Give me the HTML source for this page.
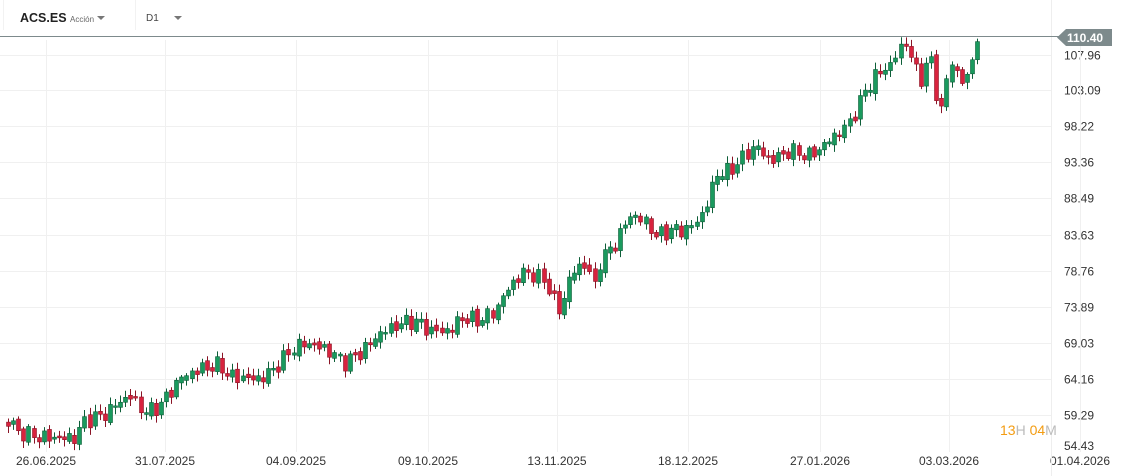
<!DOCTYPE html>
<html><head><meta charset="utf-8"><style>
body{margin:0;width:1127px;height:476px;background:#fff;overflow:hidden;font-family:"Liberation Sans",sans-serif;position:relative}
.t{position:absolute;font-size:12px;color:#333}
</style></head><body>
<svg id="s" width="1127" height="476" style="position:absolute;left:0;top:0"></svg>
<div class="t" style="left:20px;top:11px;font-weight:bold;font-size:12.5px;color:#222">ACS.ES <span style="font-weight:normal;font-size:8px;color:#666">Acción</span></div>
<div style="position:absolute;left:97px;top:16px;border:4px solid transparent;border-top:4px solid #777;border-bottom:0"></div>
<div class="t" style="left:146px;top:13px;font-size:10px;color:#444">D1</div>
<div style="position:absolute;left:174px;top:16px;border:4px solid transparent;border-top:4px solid #777;border-bottom:0"></div>
<div style="position:absolute;left:1000px;top:422px;font-size:14px;color:#f39c12">13<span style="color:#bbb">H</span> 04<span style="color:#bbb">M</span></div>
<script>
const s=document.getElementById('s');let h='';
const labs=[[55.5,'107.96'],[90.5,'103.09'],[126.5,'98.22'],[162.5,'93.36'],[198.5,'88.49'],[235.5,'83.63'],[271.5,'78.76'],[307.5,'73.89'],[343.5,'69.03'],[379.5,'64.16'],[415.5,'59.29']];
labs.forEach(l=>{h+=`<line x1="0" x2="1051" y1="${l[0]}" y2="${l[0]}" stroke="#f0f0f0"/><text x="1064" y="${l[0]+4}" font-size="12" fill="#333" font-family="Liberation Sans">${l[1]}</text>`});
h+=`<text x="1064" y="450" font-size="12" fill="#333" font-family="Liberation Sans">54.43</text>`;
const d=[[46,'26.06.2025'],[165,'31.07.2025'],[296,'04.09.2025'],[428,'09.10.2025'],[557,'13.11.2025'],[688,'18.12.2025'],[820,'27.01.2026'],[949,'03.03.2026'],[1080,'01.04.2026']];
d.forEach(l=>{h+=`<line x1="${l[0]+.5}" x2="${l[0]+.5}" y1="40" y2="452" stroke="#f0f0f0"/><text x="${l[0]}" y="465" font-size="12" fill="#333" text-anchor="middle" font-family="Liberation Sans">${l[1]}</text>`});
h+=`<line x1="3.5" x2="3.5" y1="0" y2="30" stroke="#f2f2f2"/><line x1="135.5" x2="135.5" y1="0" y2="30" stroke="#f2f2f2"/>`;
h+=`<line x1="1051.5" x2="1051.5" y1="0" y2="476" stroke="#eee"/>`;
const P=[[8,420],[20,432],[45,437],[75,437],[85,420],[105,413],[115,405],[130,395],[145,412],[160,405],[180,378],[200,368],[220,364],[230,376],[260,378],[275,368],[290,350],[305,342],[325,348],[345,362],[360,352],[380,333],[400,323],[415,320],[430,330],[450,330],[460,317],[480,320],[495,310],[510,285],[525,270],[545,280],[560,312],[570,275],[585,262],[595,285],[600,260],[615,243],[630,215],[645,220],[655,235],[670,230],[690,228],[705,210],[715,175],[730,170],[745,155],[755,145],[770,160],[790,150],[810,155],[820,148],[835,135],[850,122],[860,100],[875,75],[890,65],[905,40],[920,80],[930,55],[940,115],[950,60],[965,85],[977,38]];
function Y(x){for(let i=0;i<P.length-1;i++){if(x>=P[i][0]&&x<=P[i+1][0]){const t=(x-P[i][0])/(P[i+1][0]-P[i][0]);return P[i][1]+t*(P[i+1][1]-P[i][1]);}}return 38;}
let prev=Y(8)+3;
for(let x=8;x<=978;x+=5.1){const c=Y(x)+Math.sin(x*1.7)*5+Math.sin(x*0.37)*3;const o=prev+Math.sin(x*2.3)*2;const up=c<o;const top=Math.min(o,c),bot=Math.max(o,c)+1.5;const hi=top-2-Math.abs(Math.sin(x*3.1))*5,lo=bot+2+Math.abs(Math.cos(x*2.7))*5;
const col=up?'#1a9a5e':'#d8233e',bc=up?'#0d5e38':'#8a1426';const xc=Math.round(x);
h+=`<line x1="${xc+.5}" x2="${xc+.5}" y1="${hi}" y2="${lo}" stroke="${bc}"/><rect x="${xc-1.5}" y="${top}" width="4" height="${bot-top}" fill="${col}" stroke="${bc}" stroke-width=".6"/>`;prev=c;}
h+=`<line x1="0" x2="1060" y1="36.5" y2="36.5" stroke="#7d8a8c"/><path d="M1057 37.5L1066 29H1112V46H1066Z" fill="#7d8a8c"/><text x="1067" y="42" font-size="12" font-weight="bold" fill="#fff" font-family="Liberation Sans">110.40</text>`;
s.innerHTML=h;
</script>
</body></html>
